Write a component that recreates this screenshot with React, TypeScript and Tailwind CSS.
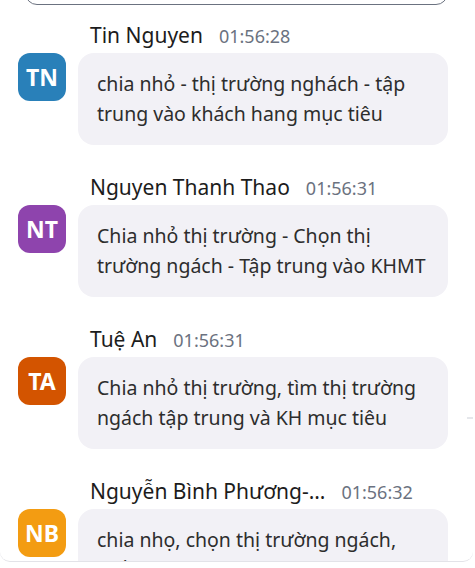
import React from "react";

type Message = {
  initials: string;
  name: string;
  time: string;
  color: string;
  text: string;
};

const messages: Message[] = [
  {
    initials: "TN",
    name: "Tin Nguyen",
    time: "01:56:28",
    color: "bg-[#2980b9]",
    text: "chia nhỏ - thị trường nghách - tập trung vào khách hang mục tiêu",
  },
  {
    initials: "NT",
    name: "Nguyen Thanh Thao",
    time: "01:56:31",
    color: "bg-[#8e44ad]",
    text: "Chia nhỏ thị trường - Chọn thị trường ngách - Tập trung vào KHMT",
  },
  {
    initials: "TA",
    name: "Tuệ An",
    time: "01:56:31",
    color: "bg-[#d35400]",
    text: "Chia nhỏ thị trường, tìm thị trường ngách tập trung và KH mục tiêu",
  },
  {
    initials: "NB",
    name: "Nguyễn Bình Phương-…",
    time: "01:56:32",
    color: "bg-[#f39c12]",
    text: "chia nhọ, chọn thị trường ngách, nhằm vào khách hàng mục tiêu",
  },
];

function ChatRow({ m }: { m: Message }) {
  return (
    <div className="flex flex-col gap-1">
      <div className="ml-[90px] flex h-7 items-baseline gap-4 leading-[28px]">
        <span className="text-[21px] text-[#1c1c1c]">{m.name}</span>
        <span className="text-[18px] text-[#6b7280]">{m.time}</span>
      </div>
      <div className="flex items-start gap-3 pl-[18px]">
        <div
          className={`${m.color} flex h-12 w-12 shrink-0 items-center justify-center rounded-xl text-[23px] font-bold text-white`}
        >
          {m.initials}
        </div>
        <div className="w-[370px] rounded-2xl bg-[#f2f1f6] px-[19px] py-4 text-[19.5px] leading-[30px] text-[#2d2d2d]">
          {m.text}
        </div>
      </div>
    </div>
  );
}

export default function App() {
  return (
    <div
      className="relative h-[562px] w-[473px] overflow-hidden rounded-b-[10px] border-b border-[#e3e3e8] bg-white"
      style={{ fontFamily: '"Noto Sans", "Open Sans", sans-serif' }}
    >
      <div className="mx-[25px] -mt-[40px] h-[45px] rounded-[12px] border border-[#6b7280]" />
      <div className="mt-[16px] flex flex-col gap-7">
        {messages.map((m, i) => (
          <ChatRow key={`msg-${i}`} m={m} />
        ))}
      </div>
      <div className="absolute right-0 top-[417px] h-[2px] w-[6px] bg-[#e5e7eb]" />
    </div>
  );
}
